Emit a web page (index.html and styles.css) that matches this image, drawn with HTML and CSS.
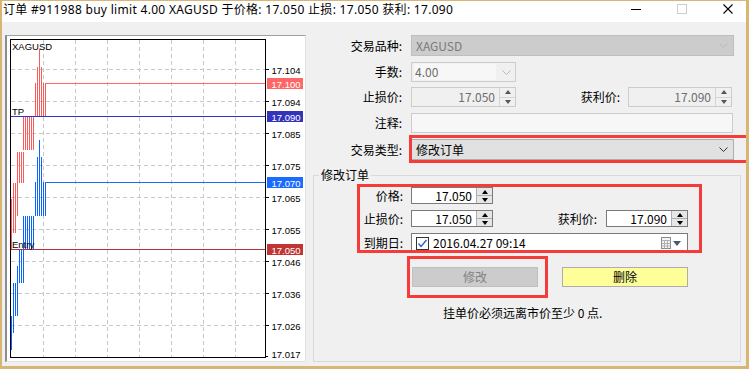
FILE: index.html
```html
<!DOCTYPE html>
<html lang="zh-CN">
<head>
<meta charset="utf-8">
<title>订单 #911988</title>
<link rel="stylesheet" href="styles.css">
</head>
<body>
<div class="window">
  <header class="titlebar">
    <div class="title">订单 #911988 buy limit 4.00 XAGUSD 于价格: 17.050 止损: 17.050 获利: 17.090</div>
    <div class="controls">
      <span class="ctl"><svg width="10" height="10" viewBox="0 0 10 10"><path d="M0 5.5H10" stroke="#000"/></svg></span>
      <span class="ctl"><svg width="10" height="10" viewBox="0 0 10 10"><rect x="0.5" y="0.5" width="9" height="9" fill="none" stroke="#cccccc"/></svg></span>
      <span class="ctl"><svg width="10" height="10" viewBox="0 0 10 10"><path d="M0.5 0.5L9.5 9.5M9.5 0.5L0.5 9.5" stroke="#000" stroke-width="1.1"/></svg></span>
    </div>
  </header>
  <main class="client">
    <section class="chart-panel">
      <svg class="chart" width="298" height="325" viewBox="7 36 298 325" shape-rendering="crispEdges">
        <path class="grid" d="M11 69.5H265M11 101.5H265M11 133.5H265M11 165.5H265M11 197.5H265M11 229.5H265M11 261.5H265M11 293.5H265M11 325.5H265"/>
        <path class="grid" d="M43.5 40V357M75.5 40V357M107.5 40V357M139.5 40V357M171.5 40V357M203.5 40V357M235.5 40V357"/>
        <g class="bars-red">
          <rect x="39" y="49" width="1" height="68"/>
          <rect x="37" y="67" width="1" height="50"/><rect x="41" y="67" width="1" height="50"/>
          <rect x="35" y="83" width="1" height="34"/><rect x="43" y="83" width="1" height="34"/><rect x="45" y="83" width="1" height="34"/>
          <rect x="23" y="117" width="1" height="33"/><rect x="25" y="117" width="1" height="33"/><rect x="27" y="117" width="1" height="33"/><rect x="29" y="117" width="1" height="33"/><rect x="31" y="117" width="1" height="33"/><rect x="33" y="117" width="1" height="33"/>
          <rect x="17" y="152" width="1" height="31"/><rect x="19" y="152" width="1" height="31"/><rect x="21" y="152" width="1" height="31"/><rect x="23" y="152" width="1" height="31"/>
          <rect x="13" y="183" width="1" height="33"/><rect x="15" y="183" width="1" height="33"/><rect x="17" y="183" width="1" height="33"/>
          <rect x="11" y="199" width="1" height="50"/><rect x="13" y="199" width="1" height="34"/><rect x="15" y="199" width="1" height="34"/>
        </g>
        <g class="bars-blue">
          <rect x="39" y="140" width="1" height="76"/>
          <rect x="37" y="157" width="1" height="59"/><rect x="41" y="157" width="1" height="59"/>
          <rect x="35" y="182" width="1" height="34"/><rect x="43" y="182" width="1" height="34"/><rect x="45" y="182" width="1" height="34"/>
          <rect x="23" y="216" width="1" height="34"/><rect x="25" y="216" width="1" height="34"/><rect x="27" y="216" width="1" height="34"/><rect x="29" y="216" width="1" height="34"/><rect x="31" y="216" width="1" height="34"/><rect x="33" y="216" width="1" height="34"/>
          <rect x="19" y="250" width="1" height="33"/><rect x="21" y="250" width="1" height="33"/><rect x="23" y="250" width="1" height="33"/>
          <rect x="17" y="266" width="1" height="17"/>
          <rect x="13" y="283" width="1" height="50"/><rect x="15" y="283" width="1" height="33"/><rect x="17" y="283" width="1" height="33"/>
          <rect x="11" y="316" width="1" height="34"/>
        </g>
        <path d="M45 83.5H265" stroke="#ff6666"/>
        <path d="M11 116.5H265" stroke="#3333cc"/>
        <path d="M45 182.5H265" stroke="#1a6cff"/>
        <path d="M11 249.5H265" stroke="#b83232"/>
        <rect x="10.5" y="39.5" width="255" height="318" fill="none" stroke="#000"/>
        <path d="M266 69.5H269M266 101.5H269M266 133.5H269M266 165.5H269M266 197.5H269M266 229.5H269M266 261.5H269M266 293.5H269M266 325.5H269M266 356.5H268" stroke="#000"/>
        <g class="lbl-chart">
          <text x="12" y="49.5">XAGUSD</text>
          <text x="12" y="114.5">TP</text>
          <text x="12" y="248">Entry</text>
        </g>
        <g class="axis">
          <text x="271.5" y="73.5">17.104</text>
          <text x="271.5" y="105.5">17.094</text>
          <text x="271.5" y="137.5">17.085</text>
          <text x="271.5" y="169.5">17.075</text>
          <text x="271.5" y="201.5">17.065</text>
          <text x="271.5" y="233.5">17.055</text>
          <text x="271.5" y="265.5">17.046</text>
          <text x="271.5" y="297.5">17.036</text>
          <text x="271.5" y="329.5">17.026</text>
          <text x="271.5" y="358">17.017</text>
        </g>
        <g class="tags">
          <rect x="267" y="78" width="36" height="11" fill="#ff6666"/>
          <text x="271.5" y="87.5">17.100</text>
          <rect x="267" y="111" width="36" height="11" fill="#3333bb"/>
          <text x="271.5" y="120.5">17.090</text>
          <rect x="267" y="177" width="36" height="11" fill="#1a6cff"/>
          <text x="271.5" y="186.5">17.070</text>
          <rect x="267" y="244" width="36" height="11" fill="#c03434"/>
          <text x="271.5" y="253.5">17.050</text>
        </g>
      </svg>
    </section>
    <section class="form">
      <div class="row row-1">
        <span class="lbl">交易品种:</span>
        <div class="combo combo-off w-full"><span>XAGUSD</span><svg class="chev" width="9" height="5" viewBox="0 0 9 5"><path d="M0.5 0.5L4.5 4.5L8.5 0.5" fill="none" stroke="#b8b8b8"/></svg></div>
      </div>
      <div class="row row-2">
        <span class="lbl">手数:</span>
        <div class="combo combo-edit w-mid"><span class="edit">4.00</span><svg class="chev" width="9" height="5" viewBox="0 0 9 5"><path d="M0.5 0.5L4.5 4.5L8.5 0.5" fill="none" stroke="#b8b8b8"/></svg></div>
      </div>
      <div class="row row-3">
        <span class="lbl">止损价:</span>
        <div class="spinbox off w-mid"><span class="val">17.050</span><span class="spin"><i class="up"></i><i class="dn"></i></span></div>
        <span class="lbl lbl-2">获利价:</span>
        <div class="spinbox off w-mid2"><span class="val">17.090</span><span class="spin"><i class="up"></i><i class="dn"></i></span></div>
      </div>
      <div class="row row-4">
        <span class="lbl">注释:</span>
        <div class="text-in w-note"></div>
      </div>
      <div class="row row-5">
        <span class="lbl">交易类型:</span>
        <div class="combo combo-on w-full"><span>修改订单</span><svg class="chev" width="9" height="5" viewBox="0 0 9 5"><path d="M0.5 0.5L4.5 4.5L8.5 0.5" fill="none" stroke="#333"/></svg></div>
      </div>
      <fieldset class="group">
        <legend>修改订单</legend>
        <div class="grow g-1">
          <span class="glbl">价格:</span>
          <div class="spinbox on w-g"><span class="val">17.050</span><span class="spin"><i class="up"></i><i class="dn"></i></span></div>
        </div>
        <div class="grow g-2">
          <span class="glbl">止损价:</span>
          <div class="spinbox on w-g"><span class="val">17.050</span><span class="spin"><i class="up"></i><i class="dn"></i></span></div>
          <span class="glbl glbl-2">获利价:</span>
          <div class="spinbox on w-g"><span class="val">17.090</span><span class="spin"><i class="up"></i><i class="dn"></i></span></div>
        </div>
        <div class="grow g-3">
          <span class="glbl">到期日:</span>
          <div class="date">
            <svg class="check" width="13" height="13" viewBox="0 0 13 13"><rect x="0.5" y="0.5" width="12" height="12" fill="#fff" stroke="#333"/><path d="M2.5 6.5L5 9.5L10.5 3" fill="none" stroke="#1b5fcc" stroke-width="1.3"/></svg>
            <span class="date-text">2016.04.27 09:14</span>
            <span class="cal">
              <svg width="10" height="12" viewBox="0 0 10 12"><rect x="0.5" y="0.5" width="9" height="11" fill="#f4f4f4" stroke="#8a8a8a"/><path d="M0.5 3.5H9.5M0.5 6.5H9.5M0.5 9H9.5M3.5 3.5V11.5M6.5 3.5V11.5" stroke="#b0b0b0"/></svg>
              <svg width="8" height="5" viewBox="0 0 8 5"><path d="M0 0H8L4 5Z" fill="#4a5678"/></svg>
            </span>
          </div>
        </div>
        <div class="buttons">
          <button class="btn btn-off" type="button">修改</button>
          <button class="btn btn-del" type="button">删除</button>
        </div>
        <p class="note">挂单价必须远离市价至少 0 点.</p>
      </fieldset>
    </section>
  </main>
  <div class="mark mark-type"></div>
  <div class="mark mark-group"></div>
  <div class="mark mark-btn"></div>
</div>
</body>
</html>
```

FILE: styles.css
```css
* { box-sizing: border-box; margin: 0; padding: 0; }
html, body { width: 749px; height: 369px; overflow: hidden; }
body {
  background: #f0f0f0;
  font-family: "Noto Sans CJK SC", "Noto Sans", sans-serif;
  font-size: 12px;
  color: #000;
}
.window {
  position: relative;
  width: 749px;
  height: 369px;
  display: flex;
  flex-direction: column;
  background: #f0f0f0;
  border-style: solid;
  border-color: #d7b572;
  border-width: 1px 3px 3px 2px;
  overflow: hidden;
}
.titlebar {
  flex: none;
  height: 21px;
  background: #fff;
  display: flex;
  align-items: flex-start;
}
.title {
  flex: 1;
  padding-left: 1px;
  font-family: "Noto Sans", "Noto Sans CJK SC", sans-serif;
  font-size: 12px;
  line-height: 17px;
  letter-spacing: 0.3px;
  white-space: nowrap;
}
.controls { display: flex; margin-right: -5px; }
.ctl {
  width: 46px;
  height: 21px;
  display: flex;
  justify-content: center;
  padding-top: 3px;
}
.ctl svg { display: block; }

.client {
  flex: 1;
  display: flex;
  gap: 7px;
  padding: 13px 5px 4px 3px;
}
.chart-panel {
  flex: none;
  width: 301px;
  background: #fff;
  border-style: solid;
  border-width: 1px 1px 1px 2px;
  border-color: #a0a0a0 #e3e3e3 #e3e3e3 #8c8c8c;
}
.chart { display: block; }
.chart .grid { stroke: #c8c8c8; stroke-dasharray: 4 3; fill: none; }
.chart .bars-red rect { fill: #ff5a5a; }
.chart .bars-blue rect { fill: #0a64ff; }
.chart text { font-family: "Liberation Sans", Arial, sans-serif; font-size: 9.5px; }
.chart .axis text, .chart .lbl-chart text { fill: #000; }
.chart .tags text { fill: #fff; }

.form { flex: 1; display: flex; flex-direction: column; min-width: 0; }
.row { display: flex; align-items: center; flex: none; }
.lbl { flex: none; width: 89px; margin-right: 9px; text-align: right; line-height: 16px; }
.lbl-2 { width: 104px; margin-right: 8px; }
.row-1 { height: 21px; }
.row-2 { height: 20px; margin-top: 6px; }
.row-3 { height: 20px; margin-top: 5px; }
.row-4 { height: 20px; margin-top: 6px; }
.row-5 { height: 21px; margin-top: 6px; }

.w-full { width: 323px; }
.w-note { width: 322px; }
.w-mid { width: 105px; }
.w-mid2 { width: 104px; }
.w-g { width: 82px; }

.combo {
  flex: none;
  height: 100%;
  display: flex;
  align-items: center;
  justify-content: space-between;
  padding: 0 5px 0 4px;
  border: 1px solid;
  line-height: 16px;
}
.combo-off { background: #cccccc; border-color: #bfbfbf; color: #7a7a7a; }
.combo-edit { background: #f0f0f0; border-color: #cccccc; color: #6d6d6d; padding: 1px 4px 1px 2px; }
.combo-edit .edit { width: 82px; height: 100%; background: #f7f7f7; padding-left: 1px; line-height: 16px; }
.combo-on { background: #e1e1e1; border-color: #adadad; color: #000; }
.chev { display: block; flex: none; }

.text-in { flex: none; height: 100%; border: 1px solid #cccccc; background: #f7f7f7; }

.spinbox { flex: none; height: 100%; display: flex; border: 1px solid; }
.spinbox .val { flex: 1; text-align: right; padding-right: 4px; line-height: 16px; align-self: center; }
.spinbox.off { border-color: #cccccc; background: #f0f0f0; color: #6d6d6d; }
.spinbox.on { border-color: #7a7a7a; background: #fff; color: #000; }
.spin { flex: none; width: 16px; display: flex; flex-direction: column; border-left: 1px solid; }
.spinbox.off .spin { border-color: #d4d4d4; background: #f0f0f0; }
.spinbox.on .spin { border-color: #adadad; background: #e6e6e6; }
.spin i { flex: 1; display: flex; align-items: center; justify-content: center; }
.spin .dn { border-top: 1px solid; }
.spinbox.off .spin .dn { border-color: #d4d4d4; }
.spinbox.on .spin .dn { border-color: #adadad; }
.spin .up::after, .spin .dn::after { content: ""; display: block; width: 0; height: 0; border-style: solid; }
.spin .up::after { border-width: 0 3px 4px 3px; border-color: transparent transparent #000 transparent; }
.spin .dn::after { border-width: 4px 3px 0 3px; border-color: #000 transparent transparent transparent; }
.spinbox.off .spin .up::after { border-bottom-color: #555; }
.spinbox.off .spin .dn::after { border-top-color: #555; }

.group {
  flex: 1;
  margin-top: 7px;
  border: 1px solid #d9d9d9;
  padding: 0;
  min-width: 0;
}
.group legend { margin-left: 5px; padding: 0 2px; line-height: 16px; font-size: 12px; }
.grow { display: flex; align-items: center; }
.glbl { flex: none; width: 89px; margin-right: 8px; text-align: right; line-height: 16px; }
.glbl-2 { width: 104px; margin-right: 9px; }
.g-1 { height: 17px; margin-top: 4px; }
.g-2 { height: 17px; margin-top: 6px; }
.g-3 { height: 20px; margin-top: 6px; }

.date {
  flex: none;
  width: 277px;
  height: 100%;
  display: flex;
  align-items: center;
  border: 1px solid #7a7a7a;
  background: #fff;
  padding: 0 6px 0 4px;
}
.check { display: block; flex: none; }
.date-text { margin-left: 4px; line-height: 16px; }
.cal { margin-left: auto; display: flex; align-items: center; gap: 2px; }
.cal svg { display: block; }

.buttons { display: flex; gap: 24px; margin: 14px 0 0 98px; height: 20px; }
.btn {
  width: 126px;
  height: 20px;
  border: 1px solid;
  font-family: inherit;
  font-size: 12px;
  line-height: 16px;
}
.btn-off { background: #cccccc; border-color: #bfbfbf; color: #838383; }
.btn-del { background: #ffff99; border-color: #adadad; color: #000; }
.note { margin: 18px 0 0 129px; line-height: 16px; }

.mark { position: absolute; border: 3px solid #f63b3b; pointer-events: none; }
.mark-type { left: 407px; top: 134px; width: 337px; height: 28px; border-right: none; }
.mark-group { left: 355px; top: 183px; width: 345px; height: 69px; }
.mark-btn { left: 405px; top: 255px; width: 141px; height: 42px; }
```
